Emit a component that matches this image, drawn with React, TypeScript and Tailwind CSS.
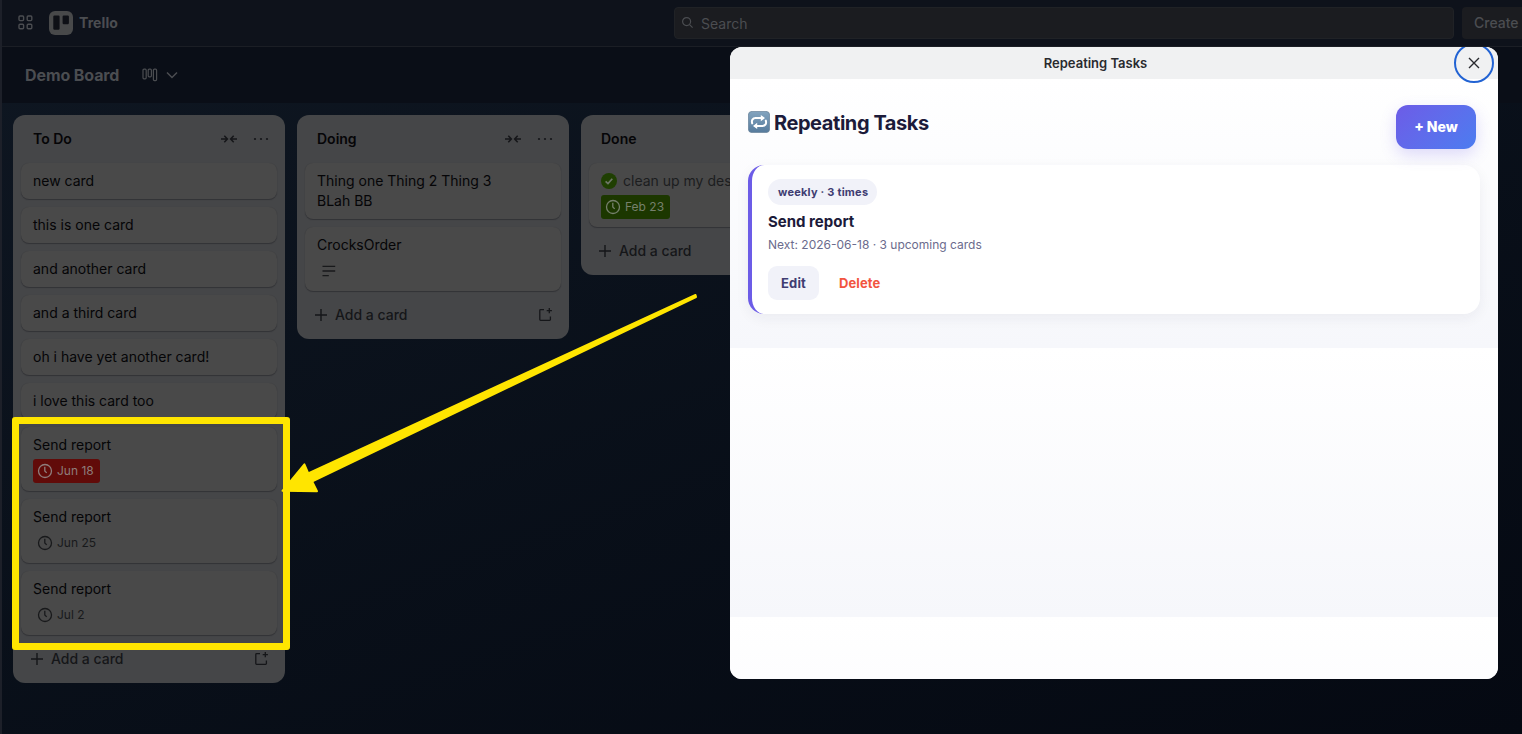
import React from 'react';

interface CardData {
  title: string;
  due?: string;
  dueStyle?: 'overdue' | 'complete' | 'normal';
  done?: boolean;
  hasDescription?: boolean;
}

interface ListData {
  name: string;
  cards: CardData[];
}

const lists: ListData[] = [
  {
    name: 'To Do',
    cards: [
      { title: 'new card' },
      { title: 'this is one card' },
      { title: 'and another card' },
      { title: 'and a third card' },
      { title: 'oh i have yet another card!' },
      { title: 'i love this card too' },
      { title: 'Send report', due: 'Jun 18', dueStyle: 'overdue' },
      { title: 'Send report', due: 'Jun 25', dueStyle: 'normal' },
      { title: 'Send report', due: 'Jul 2', dueStyle: 'normal' },
    ],
  },
  {
    name: 'Doing',
    cards: [
      { title: 'Thing one Thing 2 Thing 3\nBLah BB' },
      { title: 'CrocksOrder', hasDescription: true },
    ],
  },
  {
    name: 'Done',
    cards: [{ title: 'clean up my desk', due: 'Feb 23', dueStyle: 'complete', done: true }],
  },
];

const dueClasses = {
  overdue: 'bg-[#610b09] text-[#8f7d7c]',
  complete: 'bg-[#1c3700] text-[#76806c]',
  normal: 'text-[#18191b]',
};

const ClockIcon = () => (
  <svg width="16" height="16" viewBox="0 0 16 16" fill="none" stroke="currentColor" strokeWidth="1.3">
    <circle cx="8" cy="8" r="6.5" />
    <path d="M7.8 3.8V8l1.9 1.9" />
  </svg>
);

const CollapseIcon = () => (
  <svg width="16" height="16" viewBox="0 0 16 16" fill="none" stroke="currentColor" strokeWidth="1.5">
    <path d="M0 8h6M3.3 4.8 6.4 8l-3.1 3.2M16 8h-6M12.7 4.8 9.6 8l3.1 3.2" />
  </svg>
);

const MoreIcon = () => (
  <svg width="16" height="16" viewBox="0 0 16 16" fill="currentColor">
    <circle cx="2" cy="8" r="1.1" />
    <circle cx="8" cy="8" r="1.1" />
    <circle cx="14" cy="8" r="1.1" />
  </svg>
);

const TemplateIcon = () => (
  <svg width="16" height="16" viewBox="0 0 16 16" fill="none" stroke="currentColor" strokeWidth="1.3">
    <path d="M7 2.7H3.6a.8.8 0 0 0-.8.8v9a.8.8 0 0 0 .8.8h9a.8.8 0 0 0 .8-.8V9.6M12.3 1v5.2M9.7 3.6h5.2" />
  </svg>
);

const RepeatEmoji = () => (
  <svg width="22" height="22" viewBox="0 0 22 22" fill="none">
    <defs>
      <linearGradient id="emoji" x1="0" y1="0" x2="0" y2="1">
        <stop offset="0" stopColor="#83a4bf" />
        <stop offset="1" stopColor="#567b9c" />
      </linearGradient>
    </defs>
    <rect x=".4" y=".4" width="21.2" height="21.2" rx="3.6" fill="url(#emoji)" stroke="#69849b" strokeWidth=".8" />
    <path
      d="M4.2 12.4c-.9-3 .4-5.3 3.4-5.3h6.4M17.8 9.6c.9 3-.4 5.3-3.4 5.3H8"
      stroke="#fff"
      strokeWidth="2"
      strokeLinecap="round"
    />
    <path d="M12.8 3.9 17 7.1l-4.2 3.2zM9.2 11.7 5 14.9l4.2 3.2z" fill="#fff" />
  </svg>
);

const Card: React.FC<{ card: CardData }> = ({ card }) => (
  <div className="rounded-lg bg-[#494949] px-3 py-2 shadow-[0_1px_1px_rgba(9,10,15,0.3),0_0_1px_rgba(9,10,15,0.12)]">
    <div className="flex items-center gap-1.5">
      {card.done && (
        <svg width="16" height="16" viewBox="0 0 16 16">
          <circle cx="8" cy="8" r="8" fill="#1f3f02" />
          <path d="M4.6 8.3 7 10.6l4.3-4.9" fill="none" stroke="#6e7768" strokeWidth="1.7" />
        </svg>
      )}
      <p className={`text-sm leading-5 whitespace-pre ${card.done ? 'text-[#1c1d1f]' : 'text-[#050507]'}`}>{card.title}</p>
    </div>
    {card.due && (
      <div className={`mt-1 flex h-6 w-fit items-center gap-1 rounded-[3px] pr-1.5 pl-1 text-xs ${dueClasses[card.dueStyle ?? 'normal']}`}>
        <ClockIcon />
        <span>{card.due}</span>
      </div>
    )}
    {card.hasDescription && (
      <div className="mt-1 flex h-6 items-center pl-1 text-[#18191b]">
        <svg width="16" height="16" viewBox="0 0 16 16" stroke="currentColor" strokeWidth="1.4">
          <path d="M1.5 3.4h12.7M1.5 8h12.7M1.5 12.6h6.3" />
        </svg>
      </div>
    )}
  </div>
);

const List: React.FC<{ list: ListData }> = ({ list }) => (
  <section className="w-[272px] shrink-0 rounded-xl bg-[#454648] px-2 pb-2">
    <header className="flex h-12 items-center pr-2 pl-3">
      <h2 className="flex-1 text-sm font-semibold text-[#050507]">{list.name}</h2>
      <div className="flex gap-4 text-[#151619]">
        <CollapseIcon />
        <MoreIcon />
      </div>
    </header>
    <div className="flex flex-col gap-2">
      {list.cards.map((card, i) => (
        <Card key={i} card={card} />
      ))}
    </div>
    <footer className="mt-2 flex h-8 items-center pr-2 pl-2 text-[#151619]">
      <svg width="16" height="16" viewBox="0 0 16 16" stroke="currentColor" strokeWidth="1.4">
        <path d="M8 2v12M2 8h12" />
      </svg>
      <span className="ml-1.5 flex-1 text-sm font-medium">Add a card</span>
      <TemplateIcon />
    </footer>
  </section>
);

const TopBar = () => (
  <div className="flex h-[47px] items-center border-b border-[#1b1e25] bg-[#0e121b] text-[#4b4d51]">
    <svg className="ml-4 shrink-0" width="16" height="16" viewBox="0 0 16 16" fill="none" stroke="currentColor" strokeWidth="1.4">
      <rect x="1" y="1" width="4.6" height="4.6" rx="1" />
      <rect x="9.2" y="1" width="4.6" height="4.6" rx="1" />
      <rect x="1" y="9.2" width="4.6" height="4.6" rx="1" />
      <rect x="9.2" y="9.2" width="4.6" height="4.6" rx="1" />
    </svg>
    <svg className="ml-[15px] shrink-0" width="24" height="24" viewBox="0 0 24 24">
      <rect width="24" height="24" rx="6" fill="#48494a" />
      <rect x="4.3" y="4.6" width="6.3" height="14.2" rx="1.2" fill="#0e1016" />
      <rect x="13.6" y="4.6" width="6.3" height="8.6" rx="1.2" fill="#0e1016" />
    </svg>
    <span className="ml-1.5 w-[595px] shrink-0 text-sm font-bold tracking-[0.1px]">Trello</span>
    <div className="flex h-8 w-[780px] shrink-0 items-center rounded border border-[#202226] bg-[#1b1c20] pl-1.5">
      <svg width="14" height="14" viewBox="0 0 14 14" fill="none" stroke="currentColor" strokeWidth="1.2">
        <circle cx="5.6" cy="5.6" r="4" />
        <path d="m8.6 8.6 3 3" />
      </svg>
      <span className="mt-px ml-1.5 text-sm">Search</span>
    </div>
    <div className="ml-2 flex h-8 w-20 shrink-0 items-center rounded bg-[#1b1c20] pl-3 text-sm font-medium">Create</div>
  </div>
);

const RepeatingTasksModal = () => (
  <div className="absolute top-[47px] left-[728px] flex h-[632px] w-[768px] flex-col overflow-hidden rounded-xl bg-white">
    <div className="relative z-10 flex h-8 shrink-0 items-center bg-[#f0f1f2]">
      <h3 className="flex-1 pt-0.5 pl-[7px] text-center text-[13px] font-semibold text-[#292a2e]">Repeating Tasks</h3>
      <button className="mr-1 flex size-10 items-center justify-center rounded-full border-2 border-[#2263d3] text-[#292a2e]">
        <svg width="12" height="12" viewBox="0 0 12 12" fill="none" stroke="currentColor" strokeWidth="1.4">
          <path d="m1 1 10 10M11 1 1 11" />
        </svg>
      </button>
    </div>
    <div className="flex-1 bg-linear-to-b from-white to-[#f6f7fb] bg-[length:100%_269px] bg-repeat-y px-[18px] pt-[26px]">
      <div className="flex items-start justify-between pr-1">
        <h1 className="mt-1 flex items-center gap-1 text-[20px] leading-7 font-bold tracking-[-0.43px] text-[#1c1b3a]">
          <span className="-mt-0.5">
            <RepeatEmoji />
          </span>
          Repeating Tasks
        </h1>
        <button className="h-11 w-20 rounded-xl bg-linear-135 from-[#6c5ce7] to-[#4a7cf0] text-sm font-extrabold text-white shadow-[0_6px_16px_rgba(108,92,231,0.22)]">
          + New
        </button>
      </div>
      <div className="mt-4 h-[149px] rounded-2xl border-l-4 border-[#6c5ce7] bg-white px-4 pt-[14px] shadow-[0_4px_14px_rgba(30,30,60,0.06)]">
        <span className="flex h-[26px] w-[109px] items-center rounded-full bg-[#f1f2f9] pl-2.5 text-[11px] font-bold tracking-[0.22px] whitespace-nowrap text-[#403d72]">
          weekly · 3 times
        </span>
        <h4 className="mt-1.5 text-[15px] leading-[22px] font-bold text-[#1c1b3a]">Send report</h4>
        <p className="mt-[3px] text-xs leading-[18px] text-[#6b6b8d]">Next: 2026-06-18 · 3 upcoming cards</p>
        <div className="mt-3 flex text-[13px] font-bold tracking-[0.1px]">
          <button className="h-[34px] w-[51px] rounded-[9px] bg-[#f1f2f9] pt-0.5 text-[#403d72]">Edit</button>
          <button className="ml-5 pt-0.5 text-[#f2553f]">Delete</button>
        </div>
      </div>
    </div>
  </div>
);

const App = () => (
  <div className="relative h-[734px] w-[1522px] overflow-hidden border-l-2 border-[#1d2029] bg-linear-160 from-[#0f1722] to-[#050912] font-['Inter',sans-serif]">
    <TopBar />
    <div className="flex h-14 items-center bg-[#0a0e17] pl-[23px] text-[#4b4d51]">
      <h1 className="text-base font-bold tracking-[-0.1px]">Demo Board</h1>
      <svg className="ml-[23px]" width="16" height="16" viewBox="0 0 16 16" fill="none" stroke="currentColor" strokeWidth="1.2">
        <rect x="1" y="2.2" width="3.2" height="9.6" rx="1" />
        <rect x="6.2" y="2.2" width="3.2" height="7.6" rx="1" />
        <rect x="11.4" y="2.2" width="3.2" height="11.4" rx="1" />
      </svg>
      <svg className="ml-2" width="12" height="12" viewBox="0 0 12 12" fill="none" stroke="currentColor" strokeWidth="1.5">
        <path d="m1 3.5 5 5 5-5" />
      </svg>
    </div>
    <main className="flex items-start gap-3 pt-3 pl-[11px]">
      {lists.map((list) => (
        <List key={list.name} list={list} />
      ))}
    </main>
    <RepeatingTasksModal />
    {/* highlight box and arrow over the generated cards */}
    <div className="absolute top-[417px] left-[9.5px] h-[233px] w-[278px] rounded-[3px] border-[7px] border-[#ffe500]" />
    <svg className="pointer-events-none absolute top-[280px] left-[268px]" width="440" height="220" viewBox="0 0 440 220" fill="#ffe500" stroke="#ffe500" strokeLinejoin="round">
      <path strokeWidth="2" d="M425.5 15 38.7 193.2l3.7 8.1L426 17z" />
      <path strokeWidth="2" d="M34.4 184.3 12.5 210.8 47 211.3 42.5 202.3 38.3 193.3z" />
    </svg>
  </div>
);

export default App;
